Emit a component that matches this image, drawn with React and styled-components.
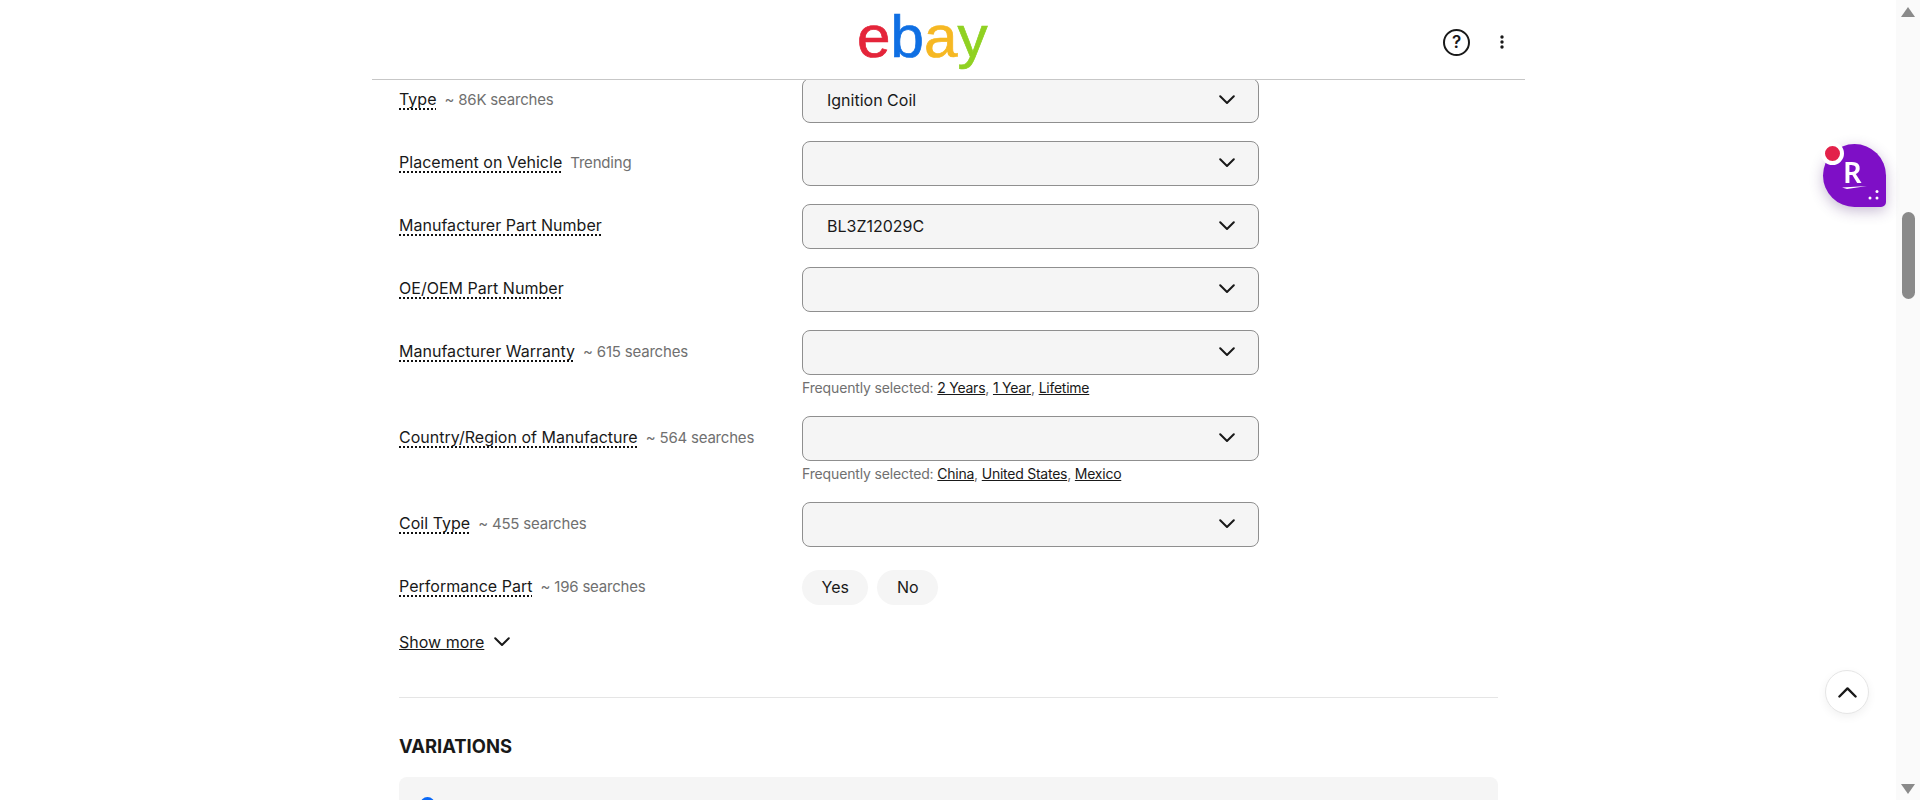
import React from "react";
import styled, { createGlobalStyle } from "styled-components";

const fields = [
  { label: "Type", note: "~ 86K searches", value: "Ignition Coil" },
  { label: "Placement on Vehicle", note: "Trending" },
  { label: "Manufacturer Part Number", value: "BL3Z12029C" },
  { label: "OE/OEM Part Number" },
  {
    label: "Manufacturer Warranty",
    note: "~ 615 searches",
    suggestions: ["2 Years", "1 Year", "Lifetime"],
  },
  {
    label: "Country/Region of Manufacture",
    note: "~ 564 searches",
    suggestions: ["China", "United States", "Mexico"],
  },
  { label: "Coil Type", note: "~ 455 searches" },
];

const Chevron = ({ up, ...props }) => (
  <svg width="16" height="10" viewBox="0 0 16 10" fill="none" {...props}>
    <path
      d={up ? "M1.2 8.8 8 2l6.8 6.8" : "M1.2 1.2 8 8l6.8-6.8"}
      stroke="#191919"
      strokeWidth="2"
      strokeLinecap="round"
      strokeLinejoin="round"
    />
  </svg>
);

const App = () => {
  return (
    <>
      <GlobalStyle />
      <Page>
        <Main>
          <Container>
            <Header>
              <Logo aria-label="eBay">
                <LogoLetter color="#e4253a">e</LogoLetter>
                <LogoLetter color="#0f6fe3">b</LogoLetter>
                <LogoLetter color="#f6b823">a</LogoLetter>
                <LogoLetter color="#90d122">y</LogoLetter>
              </Logo>
              <HeaderActions>
                <HelpIcon>?</HelpIcon>
                <svg width="4" height="14" viewBox="0 0 4 14" fill="#191919">
                  <circle cx="2" cy="2" r="1.7" />
                  <circle cx="2" cy="7" r="1.7" />
                  <circle cx="2" cy="12" r="1.7" />
                </svg>
              </HeaderActions>
            </Header>

            <Content>
              <Fields>
                {fields.map((field) => (
                  <Row key={field.label}>
                    <LabelCell>
                      <Label>{field.label}</Label>
                      {field.note && <Note>{field.note}</Note>}
                    </LabelCell>
                    <div>
                      <Select>
                        <span>{field.value}</span>
                        <Chevron />
                      </Select>
                      {field.suggestions && (
                        <Helper>
                          Frequently selected:{" "}
                          {field.suggestions.map((item, i) => (
                            <React.Fragment key={item}>
                              {i > 0 && ", "}
                              <HelperLink>{item}</HelperLink>
                            </React.Fragment>
                          ))}
                        </Helper>
                      )}
                    </div>
                  </Row>
                ))}
                <Row>
                  <LabelCell>
                    <Label>Performance Part</Label>
                    <Note>~ 196 searches</Note>
                  </LabelCell>
                  <Pills>
                    <Pill>Yes</Pill>
                    <Pill>No</Pill>
                  </Pills>
                </Row>
              </Fields>

              <ShowMore>
                <span>Show more</span>
                <Chevron />
              </ShowMore>

              <Divider />

              <SectionTitle>VARIATIONS</SectionTitle>
              <VariationBox>
                <RadioDot />
              </VariationBox>
            </Content>
          </Container>
        </Main>

        <Scrollbar>
          <ArrowUp />
          <Thumb />
          <ArrowDown />
        </Scrollbar>

        <RakutenButton>
          <RakutenBadge />
          <RakutenLetter>R</RakutenLetter>
          <RakutenMark width="63" height="63" viewBox="0 0 63 63">
            <path d="M19 43.5 44 42 24 45z" fill="#fff" />
            <circle cx="47" cy="54" r="1.5" fill="#fff" />
            <circle cx="54" cy="54" r="1.5" fill="#fff" />
            <circle cx="54" cy="47.5" r="1.5" fill="#fff" />
          </RakutenMark>
        </RakutenButton>

        <BackToTop>
          <Chevron up width="19" height="12" />
        </BackToTop>
      </Page>
    </>
  );
};

export default App;

const GlobalStyle = createGlobalStyle`
  html, body {
    margin: 0;
    padding: 0;
    background: #fff;
    overflow: hidden;
  }
  * {
    box-sizing: border-box;
  }
`;

const Page = styled.div`
  display: flex;
  height: 800px;
  overflow: hidden;
  font-family: Inter, "Liberation Sans", sans-serif;
  color: #191919;
`;

const Main = styled.main`
  flex: 1;
  min-width: 0;
`;

const Container = styled.div`
  width: 1153px;
  margin-left: 372px;
`;

const Header = styled.header`
  position: relative;
  z-index: 2;
  display: flex;
  align-items: flex-start;
  height: 80px;
  background: #fff;
  border-bottom: 1px solid #c7c7c7;
`;

const Logo = styled.div`
  margin-left: 485px;
  font-family: "Liberation Sans", Arial, sans-serif;
  font-size: 59px;
  line-height: 75px;
  -webkit-text-stroke: 0.7px currentColor;
  transform: scaleX(1.02);
  transform-origin: left center;
`;

const LogoLetter = styled.span`
  color: ${({ color }) => color};
`;

const HeaderActions = styled.div`
  display: flex;
  align-items: center;
  gap: 30px;
  margin-left: auto;
  margin-right: 21px;
  height: 84px;
`;

const HelpIcon = styled.span`
  display: flex;
  align-items: center;
  justify-content: center;
  width: 27px;
  height: 27px;
  border: 2px solid #191919;
  border-radius: 50%;
  font-size: 17px;
  font-weight: 600;
`;

const Content = styled.div`
  padding: 0 27px;
  margin-top: -2px;
`;

const Fields = styled.div`
  display: flex;
  flex-direction: column;
  gap: 18px;
`;

const Row = styled.div`
  display: grid;
  grid-template-columns: 403px 457px;
`;

const LabelCell = styled.div`
  display: flex;
  align-items: baseline;
  gap: 8px;
  padding-top: 9px;
  line-height: 24px;
`;

const Label = styled.span`
  font-size: 16px;
  letter-spacing: 0.02px;
  text-decoration: underline dotted #111 1.6px;
  text-underline-offset: 3px;
`;

const Note = styled.span`
  font-size: 15px;
  letter-spacing: -0.2px;
  color: #707070;
`;

const Select = styled.div`
  display: flex;
  align-items: center;
  justify-content: space-between;
  height: 45px;
  padding: 0 23px 2px 24px;
  background: #f5f5f5;
  border: 1px solid #8f8f8f;
  border-radius: 8px;
  font-size: 16px;
`;

const Helper = styled.div`
  margin: 3px 0 1px;
  font-size: 14px;
  line-height: 19px;
  letter-spacing: -0.15px;
  color: #707070;
`;

const HelperLink = styled.a`
  color: #191919;
  letter-spacing: -0.25px;
  text-decoration: underline;
`;

const Pills = styled.div`
  display: flex;
  gap: 9px;
  padding-top: 5px;
`;

const Pill = styled.span`
  display: flex;
  align-items: center;
  justify-content: center;
  padding: 0 19.5px 1px;
  height: 35px;
  background: #f5f5f5;
  border-radius: 18px;
  font-size: 16px;
`;

const ShowMore = styled.div`
  display: flex;
  align-items: center;
  gap: 10px;
  margin-top: 25px;
  line-height: 24px;
  font-size: 16px;
  span {
    text-decoration: underline;
  }
`;

const Divider = styled.hr`
  margin: 43px 0 0;
  border: 0;
  border-top: 1px solid #e5e5e5;
`;

const SectionTitle = styled.h2`
  margin: 36px 0 0;
  font-size: 18.4px;
  font-weight: 700;
  line-height: 24px;
`;

const VariationBox = styled.div`
  height: 120px;
  margin-top: 19px;
  padding: 20px 21px;
  background: #f5f5f5;
  border-radius: 8px;
`;

const RadioDot = styled.span`
  display: block;
  width: 15px;
  height: 15px;
  background: #0968f6;
  border-radius: 50%;
`;

const Scrollbar = styled.aside`
  position: relative;
  flex: 0 0 24px;
  display: flex;
  flex-direction: column;
  align-items: center;
  background: #fafafa;
`;

const ArrowUp = styled.span`
  margin-top: 7px;
  border-left: 7px solid transparent;
  border-right: 7px solid transparent;
  border-bottom: 10px solid #8a8a8a;
`;

const Thumb = styled.span`
  width: 13px;
  height: 87px;
  margin-top: 195px;
  background: #8a8a8a;
  border-radius: 7px;
`;

const ArrowDown = styled.span`
  margin-top: auto;
  margin-bottom: 6px;
  border-left: 7px solid transparent;
  border-right: 7px solid transparent;
  border-top: 10px solid #8a8a8a;
`;

const RakutenButton = styled.div`
  position: fixed;
  left: 1823px;
  top: 144px;
  width: 63px;
  height: 63px;
  background: #7e0fc6;
  border-radius: 50% 50% 5px 50%;
  box-shadow: 0 4px 14px rgba(70, 30, 110, 0.3);
`;

const RakutenBadge = styled.span`
  position: absolute;
  left: -2px;
  top: -2px;
  width: 23px;
  height: 23px;
  background: #e3224a;
  border: 4px solid #fff;
  border-radius: 50%;
`;

const RakutenLetter = styled.span`
  position: absolute;
  left: 20px;
  top: 13px;
  font-family: "Noto Sans", "Liberation Sans", sans-serif;
  font-size: 29px;
  font-weight: 600;
  line-height: 30px;
  color: #fff;
`;

const RakutenMark = styled.svg`
  position: absolute;
  left: 0;
  top: 0;
`;

const BackToTop = styled.div`
  position: fixed;
  left: 1825px;
  top: 670px;
  display: flex;
  align-items: center;
  justify-content: center;
  width: 44px;
  height: 44px;
  background: #fff;
  border: 1px solid #e5e5e5;
  border-radius: 50%;
  box-shadow: 0 3px 10px rgba(0, 0, 0, 0.06);
`;
